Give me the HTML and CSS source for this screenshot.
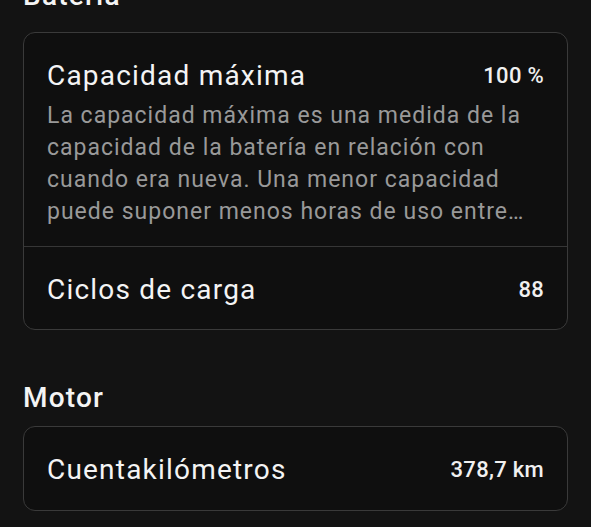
FILE: index.html
```html
<!DOCTYPE html>
<html lang="es">
<head>
<meta charset="utf-8">
<link rel="stylesheet" href="styles.css">
</head>
<body>
<div class="page">
  <h2 class="section-title first">Batería</h2>
  <div class="card">
    <div class="row row-desc">
      <div class="row-head">
        <span class="label">Capacidad máxima</span>
        <span class="value">100 %</span>
      </div>
      <p class="desc">La capacidad máxima es una medida de la capacidad de la batería en relación con cuando era nueva. Una menor capacidad puede suponer menos horas de uso entre…</p>
    </div>
    <div class="row row-simple">
      <span class="label">Ciclos de carga</span>
      <span class="value">88</span>
    </div>
  </div>
  <h2 class="section-title">Motor</h2>
  <div class="card">
    <div class="row row-simple">
      <span class="label">Cuentakilómetros</span>
      <span class="value">378,7 km</span>
    </div>
  </div>
</div>
</body>
</html>
```
FILE: styles.css
```css
html, body {
  margin: 0;
  padding: 0;
  background: #131313;
}
body {
  font-family: Roboto, "Noto Sans", sans-serif;
  color: #f2f2f2;
  overflow: hidden;
}
.page {
  padding: 0 23px;
}
.section-title {
  margin: 0;
  font-size: 28px;
  font-weight: 500;
  letter-spacing: 1.2px;
  line-height: 36px;
  color: #f4f4f4;
}
.section-title.first {
  margin-top: -22px;
  margin-bottom: 18px;
}
.section-title:not(.first) {
  margin-top: 50px;
  margin-bottom: 10px;
}
.card {
  border: 1.5px solid #3a3a3a;
  border-radius: 12px;
  background: #0f0f0f;
}
.row {
  padding: 0 23px;
}
.row + .row {
  border-top: 1.5px solid #363636;
}
.row-desc {
  padding-top: 24px;
  padding-bottom: 18px;
}
.row-head {
  display: flex;
  justify-content: space-between;
  align-items: center;
  height: 36px;
}
.row-simple {
  display: flex;
  justify-content: space-between;
  align-items: center;
  height: 83px;
  padding-top: 2px;
  box-sizing: border-box;
}
.label {
  font-size: 28px;
  font-weight: 400;
  letter-spacing: 1.2px;
  color: #f4f4f4;
}
.value {
  font-size: 22px;
  font-weight: 500;
  letter-spacing: 0.3px;
  color: #f0f0f0;
}
.desc {
  margin: 7px 0 0;
  font-size: 23px;
  letter-spacing: 1px;
  line-height: 32px;
  color: #999999;
  display: -webkit-box;
  -webkit-line-clamp: 4;
  -webkit-box-orient: vertical;
  overflow: hidden;
}
```
